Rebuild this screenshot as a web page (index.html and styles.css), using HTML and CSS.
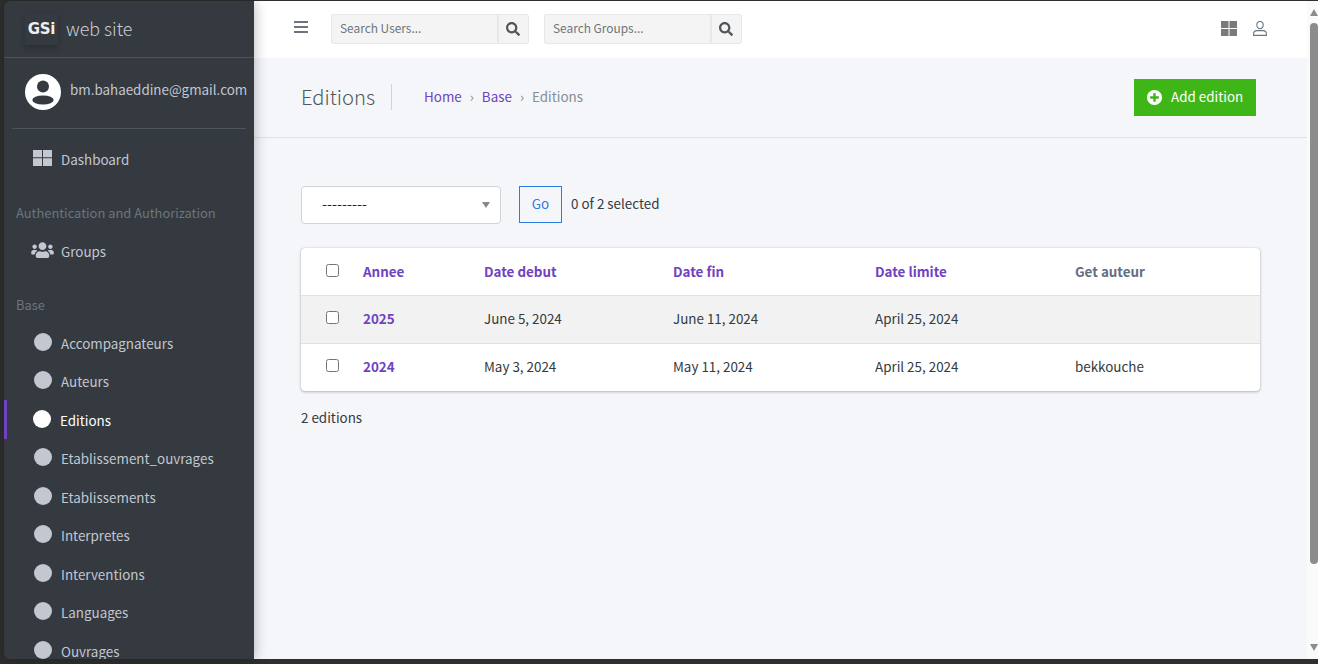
FILE: index.html
```html
<!DOCTYPE html>
<html lang="en">
<head>
<meta charset="utf-8">
<title>Editions</title>
<link rel="stylesheet" href="styles.css">
</head>
<body>
<div class="window">
  <aside class="sidebar">
    <div class="brand">
      <span class="logo">GSi</span>
      <span class="brand-text">web site</span>
    </div>
    <div class="user-panel">
      <svg class="avatar" viewBox="0 0 36 36"><circle cx="18" cy="18" r="18" fill="#fff"/><circle cx="18" cy="12.500" r="6" fill="#343a40"/><ellipse cx="18" cy="26" rx="10.700" ry="4.600" fill="#343a40"/></svg>
      <span class="user-name">bm.bahaeddine@gmail.com</span>
    </div>
    <nav class="menu">
      <a class="item icon-item">
        <svg class="item-icon" viewBox="0 0 19 16"><path fill="#c2c7d0" d="M0 0h9v7.300H0zM10 0h9v7.300h-9zM0 8.300h9V16H0zM10 8.300h9V16h-9z"/></svg>
        Dashboard
      </a>
      <div class="menu-head auth-head">Authentication and Authorization</div>
      <a class="item icon-item">
        <svg class="item-icon users" viewBox="0 0 640 512"><path fill="#c2c7d0" d="M96 224c35.300 0 64-28.700 64-64s-28.700-64-64-64-64 28.700-64 64 28.700 64 64 64zm448 0c35.300 0 64-28.700 64-64s-28.700-64-64-64-64 28.700-64 64 28.700 64 64 64zm32 32h-64c-17.600 0-33.500 7.100-45.100 18.600 40.300 22.100 68.900 62 75.100 109.400h66c17.700 0 32-14.300 32-32v-32c0-35.300-28.700-64-64-64zm-256 0c61.900 0 112-50.100 112-112S381.900 32 320 32 208 82.100 208 144s50.100 112 112 112zm76.800 32h-8.300c-20.800 10-43.900 16-68.500 16s-47.600-6-68.500-16h-8.300C179.600 288 128 339.600 128 403.200V432c0 26.500 21.500 48 48 48h288c26.500 0 48-21.500 48-48v-28.800c0-63.600-51.600-115.200-115.200-115.200zm-223.700-13.400C161.500 263.100 145.600 256 128 256H64c-35.300 0-64 28.700-64 64v32c0 17.700 14.300 32 32 32h65.900c6.300-47.400 34.900-87.300 75.200-109.400z"/></svg>
        Groups
      </a>
      <div class="menu-head base-head">Base</div>
      <a class="item"><span class="dot"></span>Accompagnateurs</a>
      <a class="item"><span class="dot"></span>Auteurs</a>
      <a class="item active"><span class="dot"></span>Editions</a>
      <a class="item"><span class="dot"></span>Etablissement_ouvrages</a>
      <a class="item"><span class="dot"></span>Etablissements</a>
      <a class="item"><span class="dot"></span>Interpretes</a>
      <a class="item"><span class="dot"></span>Interventions</a>
      <a class="item"><span class="dot"></span>Languages</a>
      <a class="item"><span class="dot"></span>Ouvrages</a>
    </nav>
  </aside>

  <div class="main">
    <header class="navbar">
      <svg class="burger" viewBox="0 0 14 12"><path fill="#6c757d" d="M0 0h14v2H0zM0 5h14v2H0zM0 10h14v2H0z"/></svg>
      <div class="search">
        <span class="search-input">Search Users...</span>
        <span class="search-btn"><svg class="search-icon" viewBox="0 0 512 512"><path fill="#50565c" d="M505 442.700L405.300 343c-4.500-4.500-10.600-7-17-7H372c27.600-35.300 44-79.700 44-128C416 93.100 322.900 0 208 0S0 93.100 0 208s93.100 208 208 208c48.300 0 92.700-16.400 128-44v16.300c0 6.400 2.500 12.500 7 17l99.700 99.700c9.400 9.400 24.600 9.400 33.900 0l28.300-28.300c9.400-9.400 9.400-24.600.1-34zM208 336c-70.700 0-128-57.200-128-128 0-70.700 57.200-128 128-128 70.700 0 128 57.200 128 128 0 70.700-57.200 128-128 128z"/></svg></span>
      </div>
      <div class="search">
        <span class="search-input">Search Groups...</span>
        <span class="search-btn"><svg class="search-icon" viewBox="0 0 512 512"><path fill="#50565c" d="M505 442.700L405.300 343c-4.500-4.500-10.600-7-17-7H372c27.600-35.300 44-79.700 44-128C416 93.100 322.900 0 208 0S0 93.100 0 208s93.100 208 208 208c48.300 0 92.700-16.400 128-44v16.300c0 6.400 2.500 12.500 7 17l99.700 99.700c9.400 9.400 24.600 9.400 33.900 0l28.300-28.300c9.400-9.400 9.400-24.600.1-34zM208 336c-70.700 0-128-57.200-128-128 0-70.700 57.200-128 128-128 70.700 0 128 57.200 128 128 0 70.700-57.200 128-128 128z"/></svg></span>
      </div>
      <div class="nav-right">
        <svg class="grid-icon" viewBox="0 0 16 15"><path fill="#7a7a7a" d="M0 0h7.500v7H0zM8.500 0H16v7H8.500zM0 8h7.500v7H0zM8.500 8H16v7H8.500z"/></svg>
        <svg class="user-icon" viewBox="0 0 14 15"><ellipse cx="7" cy="4.100" rx="3.200" ry="3.600" fill="none" stroke="#6c757d" stroke-width="1.100"/><path d="M.6 14.400v-1.500c0-2 1.500-3.300 3.300-3.300h6.200c1.800 0 3.300 1.300 3.300 3.300v1.500z" fill="none" stroke="#6c757d" stroke-width="1.100"/></svg>
      </div>
    </header>

    <section class="page-head">
      <h1 class="page-title">Editions</h1>
      <ol class="crumbs">
        <li><a class="link">Home</a></li>
        <li class="sep">›</li>
        <li><a class="link">Base</a></li>
        <li class="sep">›</li>
        <li class="current">Editions</li>
      </ol>
      <a class="add-btn">
        <svg class="add-icon" viewBox="8 8 496 496"><path fill="#fff" d="M256 8C119 8 8 119 8 256s111 248 248 248 248-111 248-248S393 8 256 8zm144 276c0 6.600-5.400 12-12 12h-92v92c0 6.600-5.400 12-12 12h-56c-6.600 0-12-5.400-12-12v-92h-92c-6.600 0-12-5.400-12-12v-56c0-6.600 5.400-12 12-12h92v-92c0-6.600 5.400-12 12-12h56c6.600 0 12 5.400 12 12v92h92c6.600 0 12 5.400 12 12v56z"/></svg>
        <span class="add-label">Add edition</span>
      </a>
    </section>

    <section class="content">
      <div class="actions">
        <div class="select"><span class="select-value">---------</span><i class="caret"></i></div>
        <button class="go">Go</button>
        <span class="count">0 of 2 selected</span>
      </div>
      <div class="card">
        <table class="table">
          <thead>
            <tr>
              <th class="c-check"><input type="checkbox" class="check"></th>
              <th class="c-year"><a class="link">Annee</a></th>
              <th class="c-start"><a class="link">Date debut</a></th>
              <th class="c-end"><a class="link">Date fin</a></th>
              <th class="c-limit"><a class="link">Date limite</a></th>
              <th class="plain">Get auteur</th>
            </tr>
          </thead>
          <tbody>
            <tr class="odd">
              <td><input type="checkbox" class="check"></td>
              <td><a class="link strong">2025</a></td>
              <td>June 5, 2024</td>
              <td>June 11, 2024</td>
              <td>April 25, 2024</td>
              <td></td>
            </tr>
            <tr>
              <td><input type="checkbox" class="check"></td>
              <td><a class="link strong">2024</a></td>
              <td>May 3, 2024</td>
              <td>May 11, 2024</td>
              <td>April 25, 2024</td>
              <td>bekkouche</td>
            </tr>
          </tbody>
        </table>
      </div>
      <p class="total">2 editions</p>
    </section>
  </div>

  <div class="scrollbar">
    <i class="arrow-up"></i>
    <div class="track"><div class="thumb"></div></div>
    <i class="arrow-down"></i>
  </div>
</div>
</body>
</html>
```

FILE: styles.css
```css
* { box-sizing: border-box; }
html, body { margin: 0; height: 100%; overflow: hidden; }
body {
  background: #2b2b2b;
  font-family: "Noto Sans CJK SC", "Noto Sans", sans-serif;
  font-size: 13.4px;
  color: #343a40;
}
.window {
  height: 664px;
  padding: 1px 0 5px 4px;
  display: flex;
  background: #2f2f2f;
}
.sidebar {
  width: 250px;
  flex: none;
  background: #343a40;
  overflow: hidden;
  border-radius: 6px 0 0 6px;
  box-shadow: 0 0 14px rgba(0, 0, 0, .3);
  position: relative;
  z-index: 2;
  color: #c2c7d0;
}
.brand {
  height: 57px;
  display: flex;
  align-items: center;
  padding-left: 21px;
  border-bottom: 1px solid #4b545c;
}
.logo {
  width: 33px;
  height: 32px;
  margin-right: 8px;
  display: flex;
  align-items: center;
  justify-content: center;
  color: #eee;
  font-family: "DejaVu Sans", sans-serif;
  font-weight: 700;
  font-size: 15px;
  letter-spacing: -.3px;
  white-space: nowrap;
  box-shadow: 0 3px 6px rgba(0, 0, 0, .2);
}
.brand-text {
  font-size: 17.85px;
  font-weight: 300;
  color: #c8ced4;
  line-height: 1;
}
.user-panel {
  margin: 0 8px;
  height: 71px;
  padding: 16px 0 0 13px;
  display: flex;
  align-items: flex-start;
  border-bottom: 1px solid #4b545c;
  white-space: nowrap;
}
.avatar { width: 36px; height: 36px; flex: none; }
.user-name { margin-left: 9px; margin-top: 4px; line-height: 22px; color: #c2c7d0; }
.menu { padding-top: 11px; }
.item {
  height: 38.5px;
  display: flex;
  align-items: center;
  padding-left: 27px;
  white-space: nowrap;
  border-left: 3px solid transparent;
}
.icon-item { padding-left: 26px; }
.item-icon { width: 19px; height: 16px; margin-right: 9px; flex: none; margin-top: -2px; }
.users { width: 23px; height: 18px; margin-left: -2px; margin-right: 7px; }
.dot {
  width: 18px;
  height: 18px;
  border-radius: 50%;
  background: #c2c7d0;
  margin-right: 9px;
  margin-top: -2px;
  flex: none;
}
.item.active {
  border-left-color: #6f42c1;
  color: #fff;
  padding-left: 26px;
}
.active .dot { background: #fff; }
.menu-head {
  padding: 7px 0 0 12px;
  line-height: 22px;
  font-size: 12.9px;
  color: #6c757d;
  white-space: nowrap;
}
.auth-head { margin-top: 16px; height: 37px; }
.base-head { margin-top: 17px; height: 36.3px; }

.main { flex: 1; min-width: 0; display: flex; flex-direction: column; background: #f4f6f9; }
.navbar {
  height: 57px;
  background: #fff;
  flex: none;
  display: flex;
  align-items: center;
  padding-left: 40px;
}
.burger { width: 14px; height: 12px; margin-right: 23px; margin-top: -5px; }
.search {
  display: flex;
  height: 30px;
  margin-right: 15.5px;
  margin-top: -1px;
  font-size: 11.9px;
  color: #6c757d;
}
.search-input {
  width: 165.5px;
  background: #f4f4f4;
  border: 1px solid #e6e8ea;
  border-right: 0;
  border-radius: 3px 0 0 3px;
  padding-left: 8px;
  line-height: 26px;
  color: #6e747a;
}
.search-btn {
  width: 32px;
  background: #f4f4f4;
  border: 1px solid #e6e8ea;
  border-left-width: 2px;
  border-radius: 0 3px 3px 0;
  display: flex;
  align-items: center;
  justify-content: center;
}
.search-icon { width: 14px; height: 14px; }
.nav-right {
  margin-left: auto;
  display: flex;
  align-items: center;
  padding-right: 40px;
  gap: 16px;
  margin-top: -2px;
}
.grid-icon { width: 16px; height: 15px; }
.user-icon { width: 14px; height: 15px; }

.page-head {
  height: 80px;
  flex: none;
  display: flex;
  align-items: center;
  padding: 0 51px 1px 47px;
  border-bottom: 1px solid #dee2e6;
}
.page-title {
  margin: 0;
  font-size: 20.2px;
  font-weight: 300;
  line-height: 26px;
  color: #50565c;
  padding-right: 16px;
  border-right: 1px solid #ced4da;
}
.crumbs {
  list-style: none;
  margin: 0 0 2px 32px;
  padding: 0;
  display: flex;
  gap: 8px;
  color: #868e96;
}
.sep { color: #868e96; }
.link { color: #6f42c1; }
.add-btn {
  margin-left: auto;
  width: 122px;
  height: 37px;
  background: #3fb618;
  color: #fff;
  display: flex;
  align-items: center;
  padding-left: 13px;
}
.add-icon { width: 15px; height: 15px; margin-right: 9px; }
.add-label { margin-bottom: 2px; }

.content { padding: 48px 47px 0; }
.actions { display: flex; align-items: center; height: 38px; }
.select {
  width: 200px;
  height: 38px;
  background: #fff;
  border: 1px solid #ced4da;
  border-radius: 4px;
  display: flex;
  align-items: center;
  justify-content: space-between;
  padding: 0 10px 0 20px;
  color: #222;
  font-size: 14.4px;
}
.select-value { margin-bottom: 4px; }
.caret {
  width: 0;
  height: 0;
  border-left: 4px solid transparent;
  border-right: 4px solid transparent;
  border-top: 6px solid #888;
  margin-top: -1px;
}
.go {
  margin-left: 18px;
  width: 43px;
  height: 37px;
  background: transparent;
  border: 1px solid #2c7be5;
  color: #2c7be5;
  font: inherit;
  padding: 0 0 4px;
  margin-top: -1px;
}
.count { margin-left: 9px; margin-bottom: 4px; }
.card {
  margin-top: 24px;
  width: 959px;
  background: #fff;
  border-radius: 4px;
  box-shadow: 0 0 1px rgba(0,0,0,.3), 0 1px 3px rgba(0,0,0,.25);
  overflow: hidden;
}
.table { width: 100%; border-collapse: collapse; table-layout: fixed; }
.table th, .table td {
  padding: 0;
  text-align: left;
  height: 48px;
}
.table td { padding-bottom: 2px; }
.table thead th { height: 47px; font-weight: 700; }
.table tbody tr { border-top: 1px solid #dee2e6; }
.table .odd { background: #f2f2f2; }
.table th:first-child, .table td:first-child { padding-left: 25px; }
.c-check { width: 62px; }
.c-year { width: 121px; }
.c-start { width: 189px; }
.c-end { width: 202px; }
.c-limit { width: 200px; }
.plain { color: #5f6e84; }
.strong { font-weight: 700; }
.check {
  display: block;
  width: 13px;
  height: 13px;
  margin: -2px 0 0 0;
}
.total { margin: 15px 0 0; line-height: 22px; }

.scrollbar {
  width: 11px;
  flex: none;
  background: #fafafa;
  display: flex;
  flex-direction: column;
  align-items: flex-end;
}
.arrow-up, .arrow-down {
  width: 0;
  height: 0;
  border-left: 4px solid transparent;
  border-right: 4px solid transparent;
  flex: none;
}
.arrow-up { border-bottom: 7px solid #8c8c8c; margin-top: 8px; }
.arrow-down { border-top: 7px solid #8c8c8c; margin-bottom: 8px; }
.track { flex: 1; width: 8px; padding-top: 7px; }
.thumb { height: 541px; width: 100%; background: #8c8c8c; border-radius: 4px; }
```
